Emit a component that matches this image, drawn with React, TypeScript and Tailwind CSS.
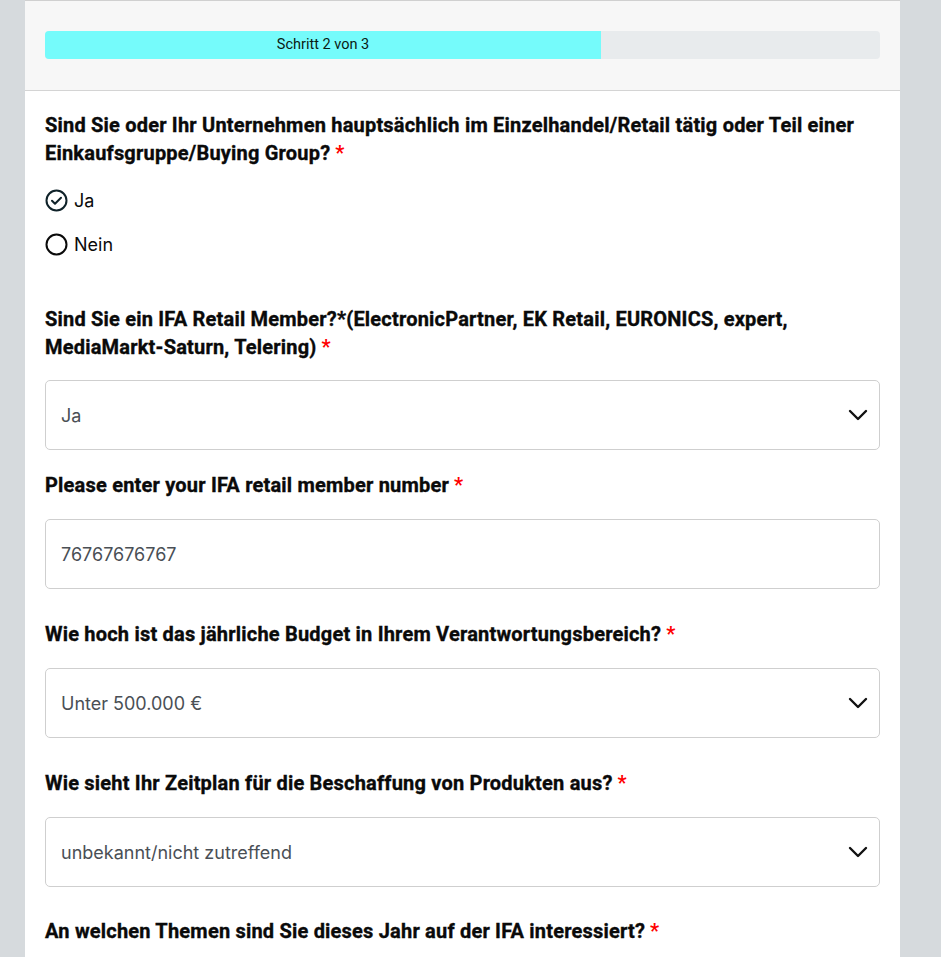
import React from "react";

const headFont = { fontFamily: "Roboto, 'Liberation Sans', sans-serif" };

function Req() {
  return <span className="ml-[5px] text-[#ff0000] [-webkit-text-stroke:0px]">*</span>;
}

function Heading({ children }: { children: React.ReactNode }) {
  return (
    <h2
      className="text-[20px] leading-[28px] font-bold tracking-[0.01em] text-[#0a0a0a] [-webkit-text-stroke:0.35px_#0a0a0a]"
      style={headFont}
    >
      {children}
      <Req />
    </h2>
  );
}

function Chevron() {
  return (
    <svg width="20" height="12" viewBox="0 0 20 12" fill="none">
      <path d="M2 2l8 8 8-8" stroke="#111" strokeWidth="2.4" strokeLinecap="round" strokeLinejoin="round" />
    </svg>
  );
}

function Select({ value }: { value: string }) {
  return (
    <div className="h-[70px] rounded-[5px] border border-[#cfcfcf] bg-white flex items-center justify-between pl-[15px] pr-[11px]">
      <span className="text-[18px] text-[#4a4f55]">{value}</span>
      <Chevron />
    </div>
  );
}

function Input({ value }: { value: string }) {
  return (
    <div className="h-[70px] rounded-[5px] border border-[#cfcfcf] bg-white flex items-center pl-[15px]">
      <span className="text-[18px] text-[#4a4f55]">{value}</span>
    </div>
  );
}

export default function App() {
  return (
    <div
      className="min-h-[957px] bg-[#d6dadd] flex justify-center"
      style={{ fontFamily: "Inter, 'Liberation Sans', sans-serif" }}
    >
      <div className="w-[875px] ml-[-16px] bg-white border-t border-[#d0d0d0] min-h-[957px]">
        <div className="bg-[#f7f7f7] border-b border-[#d4d4d4] h-[90px] px-[20px] pt-[30px]">
          <div className="h-[28px] rounded-[4px] bg-[#e8ebed] flex overflow-hidden">
            <div className="w-[556px] bg-[#75fbfb] flex items-center justify-center">
              <span className="text-[14.5px] font-normal text-[#0a1a12]" style={headFont}>
                Schritt 2 von 3
              </span>
            </div>
          </div>
        </div>

        <div className="px-[20px] pt-[20px]">
          <Heading>
            Sind Sie oder Ihr Unternehmen hauptsächlich im Einzelhandel/Retail tätig oder Teil einer
            Einkaufsgruppe/Buying Group?
          </Heading>

          <div className="mt-[22px] flex flex-col gap-[22px]">
            <label className="flex items-center gap-[6px] h-[22px]">
              <svg width="23" height="23" viewBox="0 0 23 23" fill="none">
                <circle cx="11.5" cy="11.5" r="10" stroke="#0f2229" strokeWidth="2" />
                <path d="M7 11.8l3 3 6-6" stroke="#0f2229" strokeWidth="2" strokeLinecap="round" strokeLinejoin="round" />
              </svg>
              <span className="text-[18px] text-[#0a0a0a]">Ja</span>
            </label>
            <label className="flex items-center gap-[6px] h-[22px]">
              <svg width="23" height="23" viewBox="0 0 23 23" fill="none">
                <circle cx="11.5" cy="11.5" r="10" stroke="#0a0a0a" strokeWidth="2" />
              </svg>
              <span className="text-[18px] text-[#0a0a0a]">Nein</span>
            </label>
          </div>

          <div className="mt-[50px]">
            <Heading>
              Sind Sie ein IFA Retail Member?*(ElectronicPartner, EK Retail, EURONICS, expert,{" "}
              <br />
              MediaMarkt-Saturn, Telering)
            </Heading>
          </div>
          <div className="mt-[19px]">
            <Select value="Ja" />
          </div>

          <div className="mt-[21px]">
            <Heading>Please enter your IFA retail member number</Heading>
          </div>
          <div className="mt-[20px]">
            <Input value="76767676767" />
          </div>

          <div className="mt-[31px]">
            <Heading>Wie hoch ist das jährliche Budget in Ihrem Verantwortungsbereich?</Heading>
          </div>
          <div className="mt-[20px]">
            <Select value="Unter 500.000 €" />
          </div>

          <div className="mt-[31px]">
            <Heading>Wie sieht Ihr Zeitplan für die Beschaffung von Produkten aus?</Heading>
          </div>
          <div className="mt-[20px]">
            <Select value="unbekannt/nicht zutreffend" />
          </div>

          <div className="mt-[30px]">
            <Heading>An welchen Themen sind Sie dieses Jahr auf der IFA interessiert?</Heading>
          </div>
        </div>
      </div>
    </div>
  );
}
